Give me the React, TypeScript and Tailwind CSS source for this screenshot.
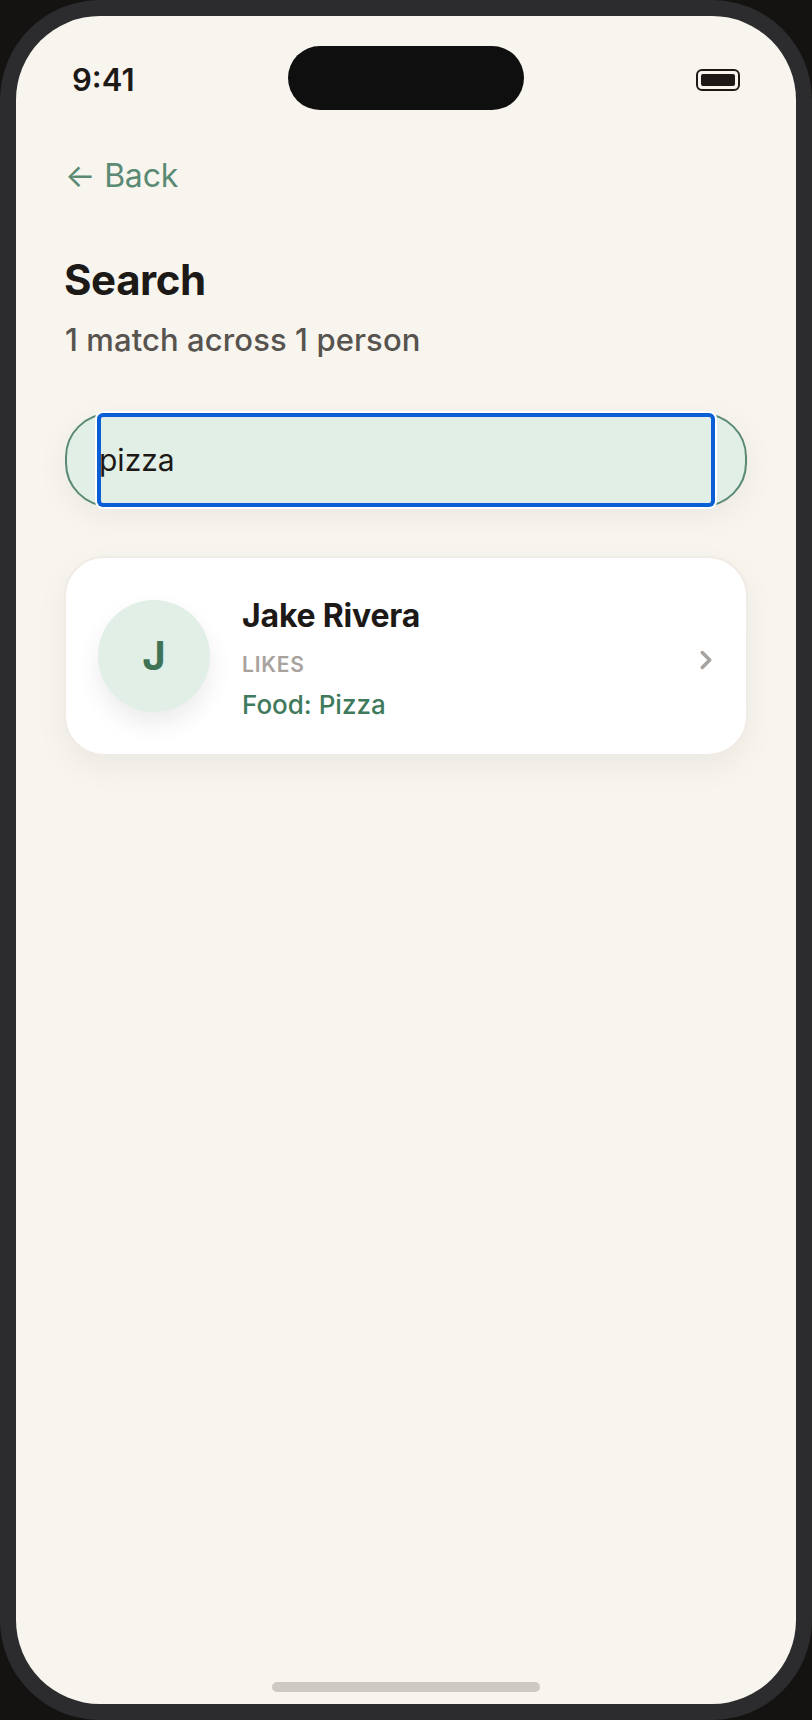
import { ChevronRight } from "lucide-react";

export default function App() {
  return (
    <div className="w-[812px] h-[1720px] bg-[#151312] font-['Inter',sans-serif] overflow-hidden">
      <div className="h-full rounded-[100px] bg-[#2c2c2e] p-4">
        <div className="relative h-full rounded-[84px] bg-[#f8f5ef] overflow-hidden flex flex-col">
          <div className="absolute top-[30px] left-[272px] w-[236px] h-[64px] rounded-full bg-[#0f0f0f]" />

          <div className="flex items-center justify-between pt-[52px] pl-[56px] pr-[56px]">
            <span className="text-[31px] leading-[24px] font-semibold text-[#1c1917]">9:41</span>
            <div className="w-[44px] h-[22px] rounded-[6px] border-2 border-[#1c1917] p-[3px]">
              <div className="h-full rounded-[2px] bg-[#1c1917]" />
            </div>
          </div>

          <div className="px-[49px]">
            <div className="mt-[64px] text-[32px] leading-[40px] tracking-[-0.2px] text-[#5a8a74]">← Back</div>

            <h1 className="mt-[60px] -ml-px text-[42px] leading-[48px] font-bold tracking-[-0.4px] text-[#1c1917]">Search</h1>
            <p className="mt-[18px] text-[31px] leading-[36px] font-medium tracking-[0.1px] text-[#57534e]">1 match across 1 person</p>

            <div className="mt-[55px] h-[94px] rounded-[44px] border-2 border-[#5a8a74] bg-[#e2efe7] shadow-[0_8px_32px_rgba(0,0,0,0.06)] relative">
              <input
                readOnly
                value="pizza"
                className="absolute left-[30px] right-[30px] -top-[2px] -bottom-[2px] rounded-[6px] bg-[#e2efe7] pl-[2px] text-[30px] text-[#1c1917] shadow-[inset_0_0_0_4px_#0a5fd6,0_0_0_2px_#ffffff] outline-none"
              />
            </div>

            <div className="mt-[49px] -mx-px h-[200px] rounded-[40px] border-2 border-[#f0ebe4] bg-white flex items-center pl-[32px] pr-[28px] shadow-[0_12px_32px_rgba(0,0,0,0.05)]">
              <div className="w-[112px] h-[112px] rounded-full bg-[#e2efe7] flex items-center justify-center text-[40px] font-bold text-[#3f7355] shadow-[0_12px_24px_rgba(0,0,0,0.08)]">
                J
              </div>
              <div className="ml-[32px] flex-1 pt-[5px]">
                <div className="text-[32px] leading-[40px] font-bold tracking-[-0.2px] text-[#1c1917]">Jake Rivera</div>
                <div className="mt-[17px] text-[21px] leading-[24px] font-semibold tracking-[0.8px] text-[#a8a29e]">LIKES</div>
                <div className="mt-[12px] text-[26px] leading-[32px] font-medium text-[#3f7a5c]">Food: Pizza</div>
              </div>
              <ChevronRight size={30} strokeWidth={2.8} className="mt-[8px] -mr-[3px] text-[#a8a29e]" />
            </div>
          </div>

          <div className="mt-auto mb-[12px] mx-auto w-[268px] h-[10px] rounded-full bg-[#cdc9c3]" />
        </div>
      </div>
    </div>
  );
}
